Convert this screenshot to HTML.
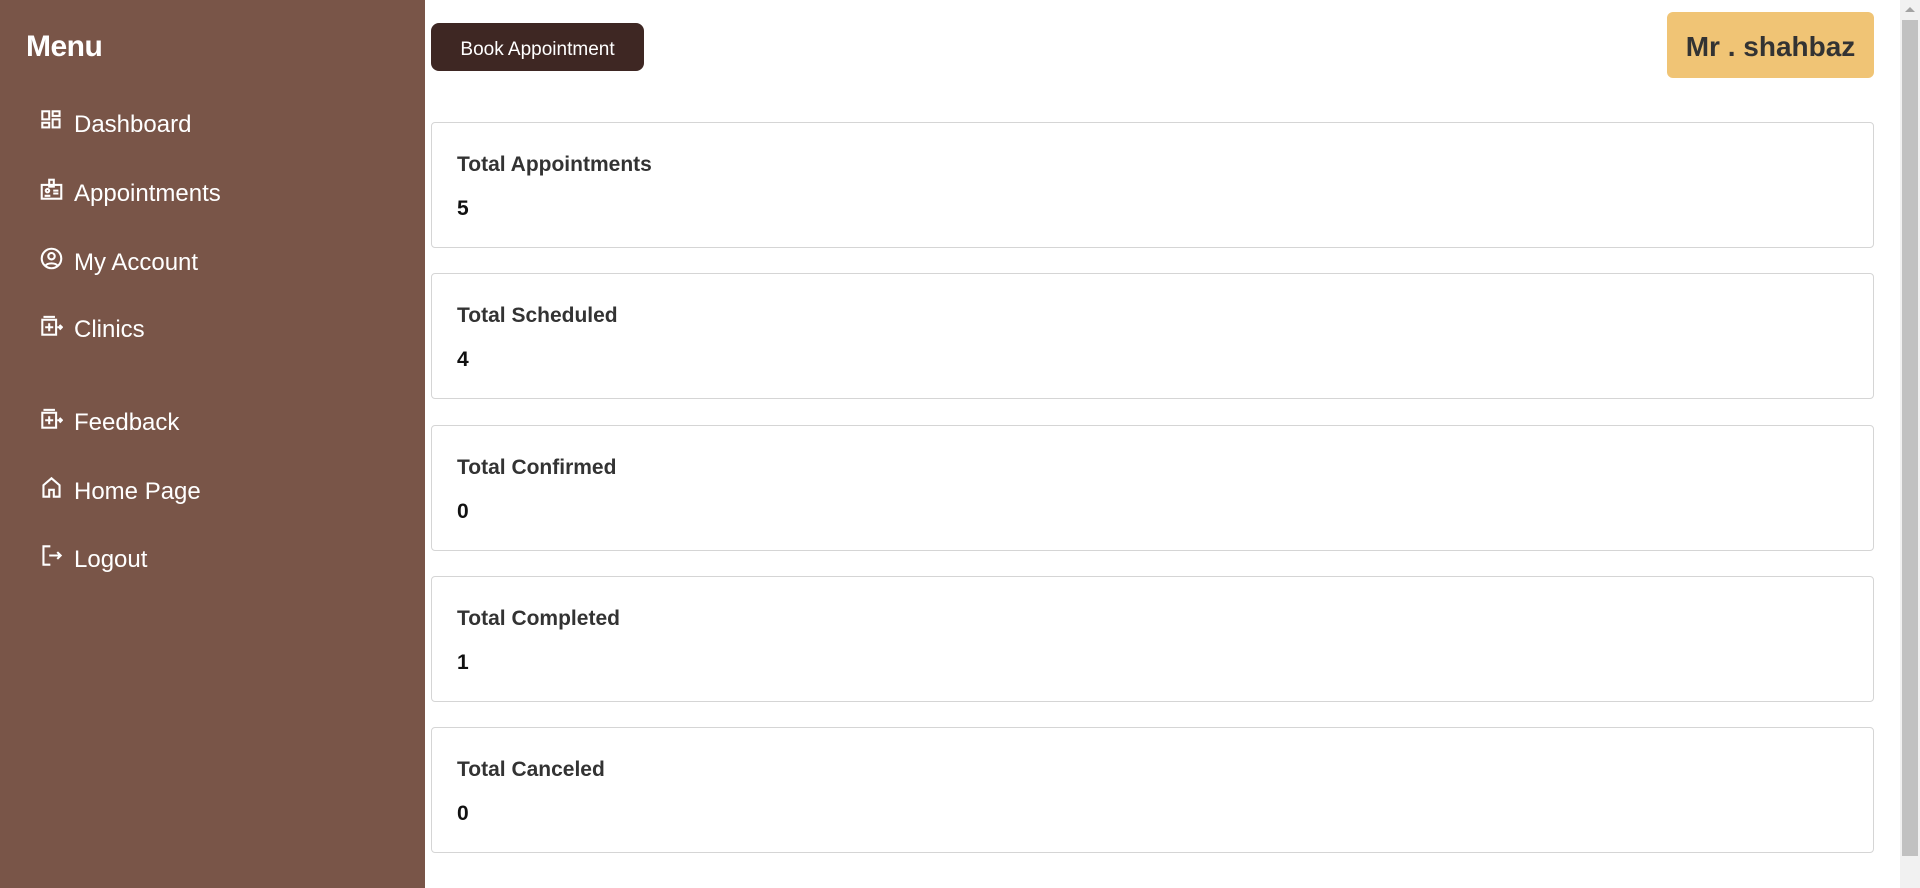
<!DOCTYPE html>
<html><head><meta charset="utf-8"><style>
*{box-sizing:border-box;margin:0;padding:0}
body{width:1920px;height:888px;overflow:hidden;background:#fff;font-family:"Liberation Sans",Arial,sans-serif;position:relative}
.side{position:absolute;left:0;top:0;width:425px;height:888px;background:#795548;color:#fff}
.menu{position:absolute;left:26px;top:30px;font-size:30px;font-weight:bold;letter-spacing:-0.5px}
.nav{position:absolute;left:40px;height:30px;display:flex;align-items:center;font-size:24px}
.nav svg{width:23px;height:23px;margin-right:11px;margin-top:-10px;fill:none;stroke:#fff;stroke-width:1.8}
.btn{position:absolute;left:431px;top:23px;width:213px;height:48px;background:#3e2723;border-radius:8px;color:#fff;font-size:19px;display:flex;align-items:center;justify-content:center;padding-top:5px}
.name{position:absolute;left:1667px;top:12px;width:207px;height:66px;background:#f0c475;border-radius:6px;color:#333;font-size:28px;font-weight:bold;display:flex;align-items:center;justify-content:center;padding-top:3px}
.card{position:absolute;left:431px;width:1443px;height:126px;border:1.5px solid #d5d5d5;border-radius:4px;color:#222}
.card .t{position:absolute;left:25px;top:30px;font-size:21px;font-weight:bold;color:#333}
.card .v{position:absolute;left:25px;top:74px;font-size:21px;font-weight:bold;color:#111}
.sb{position:absolute;left:1900px;top:0;width:20px;height:888px;background:#f1f1f1}
.sb .th{position:absolute;left:2px;top:20px;width:16px;height:836px;background:#c1c1c1}
.sb .ar{position:absolute;left:5px;top:7px;width:0;height:0;border-left:5px solid transparent;border-right:5px solid transparent;border-bottom:5px solid #a3a3a3}
</style></head><body>
<div class="side">
<div class="menu">Menu</div>
<div class="nav" style="top:110px"><svg viewBox="0 0 20 20"><rect x="2" y="2" width="6" height="7"/><rect x="11" y="2" width="6" height="4"/><rect x="2" y="12" width="6" height="4"/><rect x="11" y="9" width="6" height="7"/></svg>Dashboard</div>
<div class="nav" style="top:179px"><svg viewBox="0 0 20 20"><rect x="1.5" y="6" width="17" height="12"/><rect x="8" y="1.5" width="4" height="6"/><circle cx="6.5" cy="11" r="1.5"/><path d="M4 15.5h5M11.5 11h4.5M11.5 13.5h4.5"/></svg>Appointments</div>
<div class="nav" style="top:248px"><svg viewBox="0 0 20 20"><circle cx="10" cy="10" r="8.5"/><circle cx="10" cy="8" r="2.8"/><path d="M4.5 16.5c2-3 9-3 11 0"/></svg>My Account</div>
<div class="nav" style="top:315px"><svg viewBox="0 0 20 20"><path d="M3 2.5h10"/><rect x="2" y="5" width="12" height="13"/><path d="M8 8v7M4.5 11.5h7M15 11.5h4M17 9.5l2 2-2 2"/></svg>Clinics</div>
<div class="nav" style="top:408px"><svg viewBox="0 0 20 20"><path d="M3 2.5h10"/><rect x="2" y="5" width="12" height="13"/><path d="M8 8v7M4.5 11.5h7M15 11.5h4M17 9.5l2 2-2 2"/></svg>Feedback</div>
<div class="nav" style="top:477px"><svg viewBox="0 0 20 20"><path d="M3 18V8l7-6 7 6v10h-5v-6H8v6z"/></svg>Home Page</div>
<div class="nav" style="top:545px"><svg viewBox="0 0 20 20"><path d="M9 2H3v16h6M8 10h10M15 7l3 3-3 3"/></svg>Logout</div>
</div>
<div class="btn">Book Appointment</div>
<div class="name">Mr . shahbaz</div>
<div class="card" style="top:122px"><div class="t">Total Appointments</div><div class="v">5</div></div>
<div class="card" style="top:273px"><div class="t">Total Scheduled</div><div class="v">4</div></div>
<div class="card" style="top:425px"><div class="t">Total Confirmed</div><div class="v">0</div></div>
<div class="card" style="top:576px"><div class="t">Total Completed</div><div class="v">1</div></div>
<div class="card" style="top:727px"><div class="t">Total Canceled</div><div class="v">0</div></div>
<div class="sb"><div class="ar"></div><div class="th"></div></div>
</body></html>
